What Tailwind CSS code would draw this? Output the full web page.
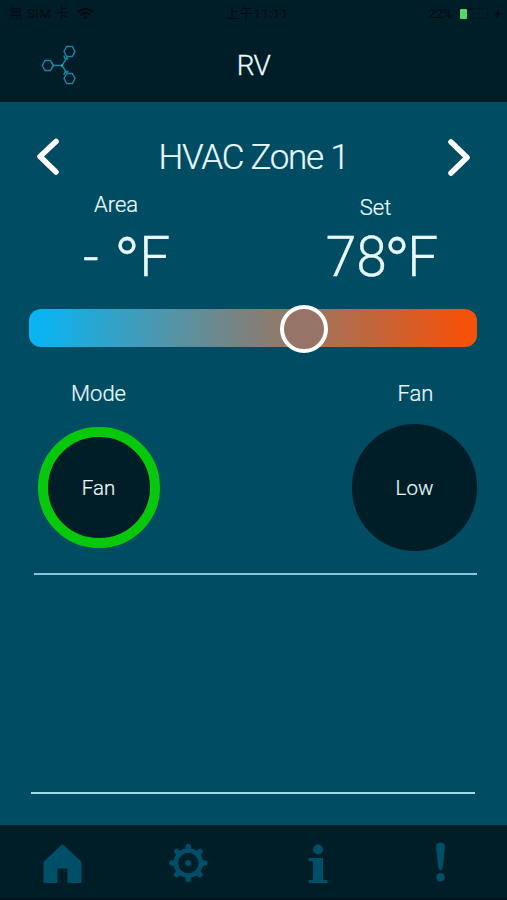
<!DOCTYPE html>
<html lang="en">
<head>
<meta charset="utf-8">
<title>RV</title>
<script src="https://cdn.jsdelivr.net/npm/@tailwindcss/browser@4"></script>
</head>
<body class="w-[507px] h-[900px] overflow-hidden bg-[#004c63] text-[#e9faff] font-light font-[Roboto,'Noto_Sans_CJK_SC',sans-serif] flex flex-col">
  <header class="h-[102px] bg-[#001e27] flex flex-col">
    <div class="h-[27px] grid grid-cols-3 items-center text-[13.5px] font-normal text-[#000c12] pl-[9px] pr-[6px] leading-none">
      <div class="flex items-center gap-[8px]">
        <span class="whitespace-nowrap tracking-[0.4px]">無 SIM 卡</span>
        <svg class="w-[17px] h-[12px]" viewBox="0 0 17 12" fill="none" stroke="currentColor" stroke-width="2.2"><path d="M1 4.2Q8.500-2 16 4.200M3.700 7Q8.500 3 13.300 7"/><path d="M6 9.200Q8.500 7 11 9.200L8.500 12Z" fill="currentColor" stroke="none"/></svg>
      </div>
      <div class="text-center pl-[4px] tracking-[0.3px] whitespace-nowrap">上午11:11</div>
      <div class="flex items-center justify-end gap-[6px]">
        <span>22%</span>
        <div class="w-[29px] h-[11px] rounded-[3px] border border-[#00161e] flex items-center"><div class="w-[7px] h-[10px] rounded-[1px] bg-[#4fd96c]"></div></div>
        <svg class="w-[7px] h-[10px]" viewBox="0 0 7 10" fill="currentColor"><path d="M5 0 0 6h3L2 10 7 4H4z"/></svg>
      </div>
    </div>
    <div class="h-[75px] grid grid-cols-[82px_1fr_82px] items-center">
      <svg class="w-[82px] h-[75px]" viewBox="0 27 82 75" fill="none" stroke="#2381a8" stroke-width="1.400">
        <path d="M42.300 65.500 45 60.500H50.500L53.200 65.500 50.500 70.500H45Z"/>
        <path d="M64 51.500 66.700 46.500H72.300L75 51.500 72.300 56.500H66.700Z"/>
        <path d="M64 78.500 66.700 73.500H72.300L75 78.500 72.300 83.500H66.700Z"/>
        <path d="M51.500 62.500 54 65.500 51.500 68.500M54 65.500H62L67.500 57M62 65.500 67.500 74M63.800 55.500 65 58.500 68.500 59M63.800 75 65 72 68.500 71.500"/>
        <circle cx="62" cy="65.500" r="1.200" fill="#45a79c" stroke="none"/>
      </svg>
      <h1 class="pt-[3px] text-center text-[28px] tracking-[-0.7px] leading-none [-webkit-text-stroke:0.3px]">RV</h1>
    </div>
  </header>

  <main class="h-[723px] flex flex-col">
    <div class="h-[85px] pt-[25px] px-[36px] flex items-center justify-between">
      <svg class="w-[24px] h-[40px]" viewBox="0 0 24 40" fill="none" stroke="#fff" stroke-width="5.500" stroke-linecap="round" stroke-linejoin="round"><path d="M20 4.500 4 19.500 20 35"/></svg>
      <h2 class="text-[35px] tracking-[-1.250px] leading-none [-webkit-text-stroke:0.2px]">HVAC Zone 1</h2>
      <svg class="w-[24px] h-[40px]" viewBox="0 0 24 40" fill="none" stroke="#fff" stroke-width="5.500" stroke-linecap="round" stroke-linejoin="round"><path d="M4 5 20 20.500 4 36"/></svg>
    </div>

    <div class="h-[122px] flex justify-between">
      <div class="w-[180px] ml-[35px] flex flex-col">
        <div class="pt-[5px] pr-[18px] text-center text-[22px] leading-[26px] [-webkit-text-stroke:0.2px]">Area</div>
        <div class="pt-[10px] pl-[3px] text-center text-[55px] leading-[58px] whitespace-nowrap [-webkit-text-stroke:0.3px]">-<span class="inline-block w-[16px]"></span><span class="inline-block h-[58px] align-top text-[70px] leading-[72px] mx-[-1px]">°</span>F</div>
      </div>
      <div class="w-[180px] mr-[35px] flex flex-col">
        <div class="pt-[8px] pr-[13px] text-center text-[22px] leading-[26px] [-webkit-text-stroke:0.2px]">Set</div>
        <div class="pt-[7px] text-center text-[55px] leading-[58px] whitespace-nowrap [-webkit-text-stroke:0.3px]">78<span class="inline-block h-[58px] align-top text-[70px] leading-[72px] mx-[-3px]">°</span>F</div>
      </div>
    </div>

    <div class="relative ml-[29px] w-[448px] h-[38px] rounded-[12px] bg-linear-to-r/srgb from-[#0bb3f0] from-3% via-[#80807a] via-50% to-[#f4510b] to-97%">
      <div class="absolute left-[251px] top-[-4px] w-[48px] h-[48px] rounded-full border-[4.500px] border-white bg-[#967566]"></div>
    </div>

    <div class="pt-[34px] h-[226px] pl-[36px] pr-[30px] flex justify-between">
      <div class="w-[125px] flex flex-col items-center">
        <div class="text-[22px] leading-[26px] [-webkit-text-stroke:0.2px]">Mode</div>
        <div class="mt-[20px] w-[122px] h-[121px] rounded-full border-[10px] border-[#08c80b] bg-[#001e27] flex items-center justify-center text-[20.500px] pt-[2px] [-webkit-text-stroke:0.2px]">Fan</div>
      </div>
      <div class="w-[125px] flex flex-col items-center">
        <div class="pl-[2px] text-[22px] leading-[26px] [-webkit-text-stroke:0.2px]">Fan</div>
        <div class="mt-[17px] w-[125px] h-[127px] rounded-full bg-[#001e27] flex items-center justify-center text-[20.500px] pt-[2px] [-webkit-text-stroke:0.2px]">Low</div>
      </div>
    </div>

    <div class="ml-[34px] w-[443px] h-[219px] border-t-2 border-[#85c6d9]"></div>
    <div class="ml-[31px] w-[444px] h-[2px] bg-[#a4d9e8]"></div>
  </main>

  <footer class="h-[75px] bg-[#001e27] text-[#004f68] flex border-b-2 border-[#00131c]">
    <svg class="w-[507px] h-[73px]" viewBox="0 825 507 73" fill="currentColor">
      <path d="M62.500 844 43.500 862V883H57.500V868.500H67.500V883H81.500V862Z"/>
      <circle cx="188.300" cy="863" r="12.500" fill="none" stroke="currentColor" stroke-width="4.500"/>
      <circle cx="188.300" cy="863" r="3"/>
      <g stroke="currentColor" stroke-width="5.500" stroke-linecap="round">
        <path d="M188.300 849V846.500M188.300 877V879.500M174.300 863H171.800M202.300 863H204.800M178.400 853.100 176.700 851.400M198.200 853.100 199.900 851.400M178.400 872.900 176.700 874.600M198.200 872.900 199.900 874.600"/>
      </g>
      <circle cx="318" cy="849.500" r="5"/>
      <path d="M308.500 858H323V878.500Q323 880 324.500 880H327.500V883H308.500V880H311.500Q313 880 313 878.500V863Q313 861 311 861H308.500Z"/>
      <path d="M436 847Q436 842.500 440.500 842.500T445 847L442.800 867Q442.500 870 440.500 870T438.200 867Z"/>
      <circle cx="440.500" cy="877.300" r="4.300"/>
    </svg>
  </footer>
</body>
</html>
